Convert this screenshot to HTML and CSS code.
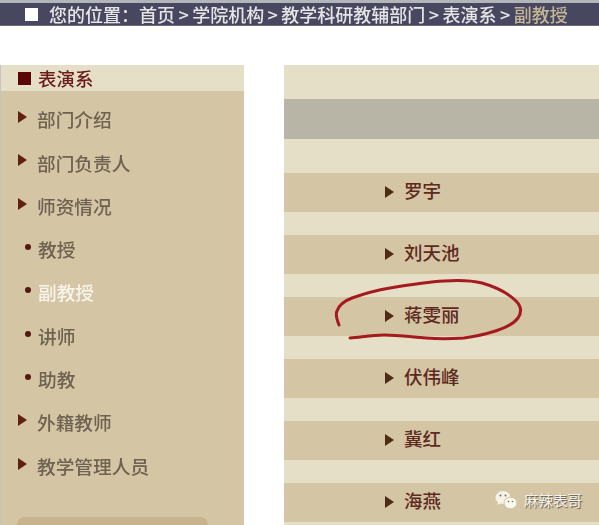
FILE: index.html
```html
<!DOCTYPE html>
<html lang="zh">
<head>
<meta charset="utf-8">
<title>副教授</title>
<link rel="stylesheet" href="styles.css">
</head>
<body>
<div class="page">
  <div class="topline"></div>
  <div class="crumb">
    <span class="crumb-box"></span>
    <span class="crumb-text">您的位置：首页 &gt; 学院机构 &gt; 教学科研教辅部门 &gt; 表演系 &gt; <span class="crumb-current">副教授</span></span>
  </div>
  <div class="columns">
    <aside class="side">
      <div class="side-head"><span class="square"></span><span class="soft">表演系</span></div>
      <ul class="menu">
        <li class="item"><span class="arrow"></span>部门介绍</li>
        <li class="item"><span class="arrow"></span>部门负责人</li>
        <li class="item"><span class="arrow"></span>师资情况</li>
        <li class="item"><span class="dot"></span>教授</li>
        <li class="item active"><span class="dot"></span>副教授</li>
        <li class="item"><span class="dot"></span>讲师</li>
        <li class="item"><span class="dot"></span>助教</li>
        <li class="item"><span class="arrow"></span>外籍教师</li>
        <li class="item"><span class="arrow"></span>教学管理人员</li>
      </ul>
      <div class="side-tab"></div>
    </aside>
    <main class="list">
      <div class="band-top"></div>
      <div class="band-grey"></div>
      <div class="band-gap"></div>
      <div class="row"><span class="row-arrow"></span>罗宇</div>
      <div class="spacer"></div>
      <div class="row"><span class="row-arrow"></span>刘天池</div>
      <div class="spacer"></div>
      <div class="row"><span class="row-arrow"></span>蒋雯丽</div>
      <div class="spacer"></div>
      <div class="row"><span class="row-arrow"></span>伏伟峰</div>
      <div class="spacer"></div>
      <div class="row"><span class="row-arrow"></span>冀红</div>
      <div class="spacer"></div>
      <div class="row"><span class="row-arrow"></span>海燕</div>
    </main>
  </div>
  <svg class="scribble" width="200" height="70" viewBox="0 0 200 70" aria-hidden="true">
    <path d="M3 46 C1 41 -1 36 1 32 C3 26 8 22 16 19 C30 14 42 11 54 9 C72 6 90 3 108 2 C122 1 134 1 146 4 C160 8 172 14 180 22 C185 27 186 33 182 39 C176 47 160 54 128 59 C114 60 102 60 90 59 C76 58 62 56 48 56 C36 56 26 58 14 59" fill="none" stroke="#a51a1e" stroke-width="3" stroke-linecap="round"/>
  </svg>
  <div class="watermark">
    <svg class="wechat" width="23" height="20" viewBox="0 0 23 20" aria-hidden="true">
      <ellipse cx="8" cy="7.500" rx="7.500" ry="6.500" fill="#f6f2e6"/>
      <path d="M3 11 L2.500 15 L7 12.500Z" fill="#f6f2e6"/>
      <ellipse cx="15.500" cy="13" rx="6.500" ry="5.800" fill="#fbf8ef" stroke="#d4c5a5" stroke-width="1"/>
      <circle cx="5.500" cy="5.500" r="0.900" fill="#6d6658"/>
      <circle cx="10.500" cy="5.500" r="0.900" fill="#6d6658"/>
      <circle cx="13.500" cy="11.500" r="0.800" fill="#6d6658"/>
      <circle cx="17.500" cy="11.500" r="0.800" fill="#6d6658"/>
    </svg>
    <span class="wm-text">麻辣表哥</span>
  </div>
</div>
</body>
</html>
```

FILE: styles.css
```css
* { box-sizing: border-box; }
html, body { margin: 0; padding: 0; }
body {
  width: 599px;
  height: 525px;
  overflow: hidden;
  background: #fff;
  font-family: "Noto Sans CJK SC", "Liberation Sans", sans-serif;
}
.page { position: relative; width: 599px; height: 525px; overflow: hidden; }
.topline { height: 3px; background: #b4b5bb; }
.crumb {
  height: 23px;
  background: #47485f;
  border-bottom: 1px solid #6d6d7c;
  display: flex;
  align-items: center;
  padding-left: 25px;
  color: #e6e5e6;
  font-size: 18px;
  font-weight: 500;
  word-spacing: -0.600px;
  white-space: nowrap;
}
.crumb-box { width: 13px; height: 13px; background: #fff; margin-right: 11px; flex: none; }
.crumb-text { filter: blur(0.400px); }
.crumb-current { color: #c3b597; }
.columns {
  display: flex;
  gap: 40px;
  margin-top: 39px;
  height: 460px;
  border-left: 1px solid #c4c4c4;
}
.side {
  width: 243px;
  flex: none;
  background: #d4c5a5;
  display: flex;
  flex-direction: column;
}
.side-head {
  height: 28px;
  background: #e6dfc8;
  display: flex;
  align-items: center;
  padding-left: 17px;
  color: #6b1a1a;
  font-size: 18.500px;
  font-weight: 500;
}
.soft { filter: blur(0.300px); }
.square { width: 13px; height: 13px; background: #5a0606; margin-right: 7px; flex: none; }
.menu { list-style: none; margin: 0; padding: 7px 0 0; }
.item {
  height: 43.300px;
  display: flex;
  align-items: center;
  padding-left: 17px;
  color: #6e6250;
  font-size: 18.700px;
  font-weight: 500;
  line-height: 1;
  white-space: nowrap;
  filter: blur(0.400px);
}
.item.active { color: #f7f4ea; }
.arrow {
  width: 0; height: 0; flex: none;
  margin: -5px 10px 0 0;
  border-left: 9px solid #63200f;
  border-top: 6px solid transparent;
  border-bottom: 6px solid transparent;
}
.dot {
  width: 6px; height: 6px; flex: none;
  border-radius: 50%;
  background: #55180f;
  margin: -5px 7px 0 7px;
}
.side-tab {
  width: 191px;
  height: 10px;
  margin: 29px 0 0 16px;
  border-radius: 8px 8px 0 0;
  background: #c7b48f;
}
.list { flex: 1; display: flex; flex-direction: column; background: #e6dfc8; }
.band-top { height: 34px; }
.band-grey { height: 40px; background: #b8b5a6; }
.band-gap { height: 34px; }
.row {
  height: 39px;
  flex: none;
  background: #d4c5a5;
  display: flex;
  align-items: center;
  padding: 0 0 5px 101px;
  color: #5e2a20;
  font-size: 18.500px;
  font-weight: 500;
}
.row-arrow {
  width: 0; height: 0; flex: none;
  margin: 3px 10px 0 0;
  border-left: 9px solid #4f2a14;
  border-top: 6px solid transparent;
  border-bottom: 6px solid transparent;
}
.spacer { height: 23px; flex: none; }
.scribble { position: absolute; left: 336px; top: 279px; overflow: visible; }
.watermark {
  position: absolute;
  left: 495px;
  top: 489px;
  display: flex;
  align-items: center;
  gap: 6px;
}
.wm-text {
  color: #f4f2ec;
  font-size: 14.500px;
  text-shadow: 1px 1px 1px #5b5548;
  white-space: nowrap;
}
```
